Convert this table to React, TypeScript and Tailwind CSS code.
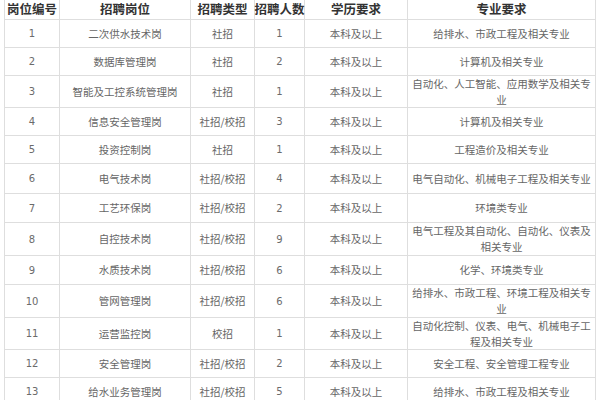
import React from "react";

type Row = {
  id: string;
  name: string;
  type: string;
  count: string;
  edu: string;
  major: string[];
  h: string;
};

const rows: Row[] = [
  { id: "1", name: "二次供水技术岗", type: "社招", count: "1", edu: "本科及以上", major: ["给排水、市政工程及相关专业"], h: "h-[28px]" },
  { id: "2", name: "数据库管理岗", type: "社招", count: "2", edu: "本科及以上", major: ["计算机及相关专业"], h: "h-[28px]" },
  { id: "3", name: "智能及工控系统管理岗", type: "社招", count: "1", edu: "本科及以上", major: ["自动化、人工智能、应用数学及相关专", "业"], h: "h-[32px]" },
  { id: "4", name: "信息安全管理岗", type: "社招/校招", count: "3", edu: "本科及以上", major: ["计算机及相关专业"], h: "h-[28px]" },
  { id: "5", name: "投资控制岗", type: "社招", count: "1", edu: "本科及以上", major: ["工程造价及相关专业"], h: "h-[28px]" },
  { id: "6", name: "电气技术岗", type: "社招/校招", count: "4", edu: "本科及以上", major: ["电气自动化、机械电子工程及相关专业"], h: "h-[30px]" },
  { id: "7", name: "工艺环保岗", type: "社招/校招", count: "2", edu: "本科及以上", major: ["环境类专业"], h: "h-[29px]" },
  { id: "8", name: "自控技术岗", type: "社招/校招", count: "9", edu: "本科及以上", major: ["电气工程及其自动化、自动化、仪表及", "相关专业"], h: "h-[33px]" },
  { id: "9", name: "水质技术岗", type: "社招/校招", count: "6", edu: "本科及以上", major: ["化学、环境类专业"], h: "h-[29px]" },
  { id: "10", name: "管网管理岗", type: "社招/校招", count: "6", edu: "本科及以上", major: ["给排水、市政工程、环境工程及相关专", "业"], h: "h-[33px]" },
  { id: "11", name: "运营监控岗", type: "校招", count: "1", edu: "本科及以上", major: ["自动化控制、仪表、电气、机械电子工", "程及相关专业"], h: "h-[32px]" },
  { id: "12", name: "安全管理岗", type: "社招/校招", count: "2", edu: "本科及以上", major: ["安全工程、安全管理工程专业"], h: "h-[28px]" },
  { id: "13", name: "给水业务管理岗", type: "社招/校招", count: "5", edu: "本科及以上", major: ["给排水、市政工程及相关专业"], h: "h-[28px]" },
];

const headers = ["岗位编号", "招聘岗位", "招聘类型", "招聘人数", "学历要求", "专业要求"];

const cell = "flex items-center justify-center border-r border-b border-[#dedede]";
const txt = "text-[10.5px] text-[#666] whitespace-nowrap";
const numTxt = "text-[10px] text-[#6b6b6b] font-['DejaVu_Sans','Noto_Sans_CJK_SC',sans-serif]";

export default function App() {
  return (
    <div className="w-[600px] h-[400px] overflow-hidden bg-white font-['Noto_Sans_CJK_SC','Noto_Sans',sans-serif]">
      <div className="ml-[4px] w-[591px] grid grid-cols-[55px_131px_64px_50px_103px_188px] border-l border-[#dedede]">
        {headers.map((h) => (
          <div
            key={h}
            className="h-[20px] flex items-center justify-center pb-[3px] border-r border-b border-[#dedede] text-[12.5px] leading-[15px] font-bold text-[#333] whitespace-nowrap"
          >
            {h}
          </div>
        ))}
        {rows.map((r) => (
          <React.Fragment key={r.id}>
            <div className={`${cell} ${numTxt} ${r.h}`}>{r.id}</div>
            <div className={`${cell} ${txt} ${r.h}`}>{r.name}</div>
            <div className={`${cell} ${txt} ${r.h}`}>{r.type}</div>
            <div className={`${cell} ${numTxt} ${r.h}`}>{r.count}</div>
            <div className={`${cell} ${txt} ${r.h}`}>{r.edu}</div>
            <div className={`${cell} ${txt} ${r.h} flex-col leading-[16px]`}>
              {r.major.map((m) => (
                <span key={m}>{m}</span>
              ))}
            </div>
          </React.Fragment>
        ))}
      </div>
    </div>
  );
}
